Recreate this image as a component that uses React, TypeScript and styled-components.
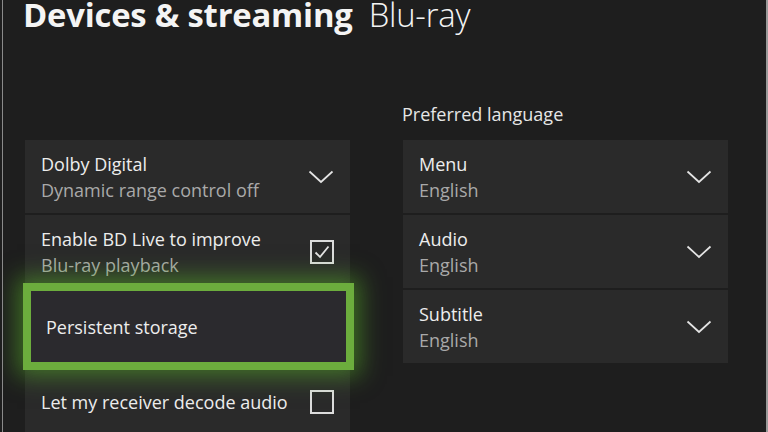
import React from 'react'
import styled, { createGlobalStyle } from 'styled-components'

const GlobalStyle = createGlobalStyle`
  html, body {
    margin: 0;
    padding: 0;
    background: #1e1e1e;
  }
  body {
    font-family: "Open Sans", "Noto Sans", sans-serif;
  }
`

type Setting = {
  title: string
  sub?: string
  control: 'chevron' | 'checked' | 'unchecked' | 'none'
  focused?: boolean
}

const playback: Setting[] = [
  { title: 'Dolby Digital', sub: 'Dynamic range control off', control: 'chevron' },
  { title: 'Enable BD Live to improve', sub: 'Blu-ray playback', control: 'checked' },
  { title: 'Persistent storage', control: 'none', focused: true },
  { title: 'Let my receiver decode audio', control: 'unchecked' },
]

const languages: Setting[] = [
  { title: 'Menu', sub: 'English', control: 'chevron' },
  { title: 'Audio', sub: 'English', control: 'chevron' },
  { title: 'Subtitle', sub: 'English', control: 'chevron' },
]

function Chevron() {
  return (
    <svg width="26" height="14" viewBox="0 0 26 14">
      <polyline points="1.5,1.5 13,12 24.5,1.5" fill="none" stroke="#e4e4e4" strokeWidth="1.7" />
    </svg>
  )
}

function Control({ kind }: { kind: Setting['control'] }) {
  if (kind === 'chevron') return <Chevron />
  if (kind === 'none') return null
  return (
    <Box>
      {kind === 'checked' && (
        <svg width="20" height="20" viewBox="0 0 20 20">
          <polyline points="3.5,10.5 8,15 16.5,4.5" fill="none" stroke="#e4e4e4" strokeWidth="1.8" />
        </svg>
      )}
    </Box>
  )
}

function SettingTile({ s }: { s: Setting }) {
  return (
    <Tile $focused={s.focused}>
      <TileText>
        <TileTitle>{s.title}</TileTitle>
        {s.sub && <TileSub>{s.sub}</TileSub>}
      </TileText>
      <Control kind={s.control} />
    </Tile>
  )
}

export default function App() {
  return (
    <>
      <GlobalStyle />
      <Screen>
        <Header>
          <strong>Devices &amp; streaming</strong>
          <span>Blu-ray</span>
        </Header>
        <Columns>
          <Column>
            <GroupLabel />
            <Stack>
              {playback.map((s) => (
                <SettingTile key={s.title} s={s} />
              ))}
            </Stack>
          </Column>
          <Column>
            <GroupLabel>Preferred language</GroupLabel>
            <Stack>
              {languages.map((s) => (
                <SettingTile key={s.title} s={s} />
              ))}
            </Stack>
          </Column>
        </Columns>
      </Screen>
    </>
  )
}

const Screen = styled.div`
  box-sizing: border-box;
  width: 766px;
  height: 432px;
  margin-left: 2px;
  overflow: hidden;
  background: #1e1e1e;
  border-left: 1px solid #8a8a8a;
  border-right: 2px solid #9a9a9a;
  color: #ececec;
`

const Header = styled.h1`
  display: flex;
  align-items: baseline;
  gap: 16px;
  margin: 0;
  padding: 0 0 0 20px;
  height: 60px;
  line-height: 30px;
  font-size: 32.8px;
  letter-spacing: -0.2px;
  color: #f4f4f4;

  strong {
    font-weight: 700;
  }
  span {
    font-weight: 300;
  }
`

const Columns = styled.div`
  display: grid;
  grid-template-columns: 325px 325px;
  column-gap: 53px;
  padding-left: 22px;
  align-items: start;
`

const Column = styled.div`
  display: flex;
  flex-direction: column;
`

const GroupLabel = styled.div`
  box-sizing: border-box;
  height: 80px;
  padding-bottom: 14px;
  display: flex;
  align-items: flex-end;
  font-size: 18px;
  line-height: 24px;
  color: #e6e6e6;
  margin-left: -1px;
`

const Stack = styled.div`
  display: flex;
  flex-direction: column;
  gap: 2px;
`

const Tile = styled.div<{ $focused?: boolean }>`
  position: relative;
  display: flex;
  align-items: center;
  justify-content: space-between;
  height: 73px;
  box-sizing: border-box;
  padding: 0 16px 0 16px;
  background: #2a2a2a;

  ${(p) =>
    p.$focused &&
    `
    z-index: 1;
    height: 87px;
    margin: -7px -4px -7px -2px;
    padding-left: 15px;
    background: #2b2a2e;
    border: 8.5px solid #6cad3d;
    box-shadow: 0 0 22px 6px rgba(92, 190, 40, 0.5);
  `}
`

const TileText = styled.div`
  display: flex;
  flex-direction: column;
`

const TileTitle = styled.div`
  font-size: 18px;
  line-height: 26px;
  color: #ededed;
`

const TileSub = styled.div`
  font-size: 18px;
  line-height: 26px;
  color: #a9a9a9;
`

const Box = styled.div`
  box-sizing: border-box;
  width: 24px;
  height: 24px;
  border: 2px solid #dcdcdc;
  display: flex;
  align-items: center;
  justify-content: center;
`
